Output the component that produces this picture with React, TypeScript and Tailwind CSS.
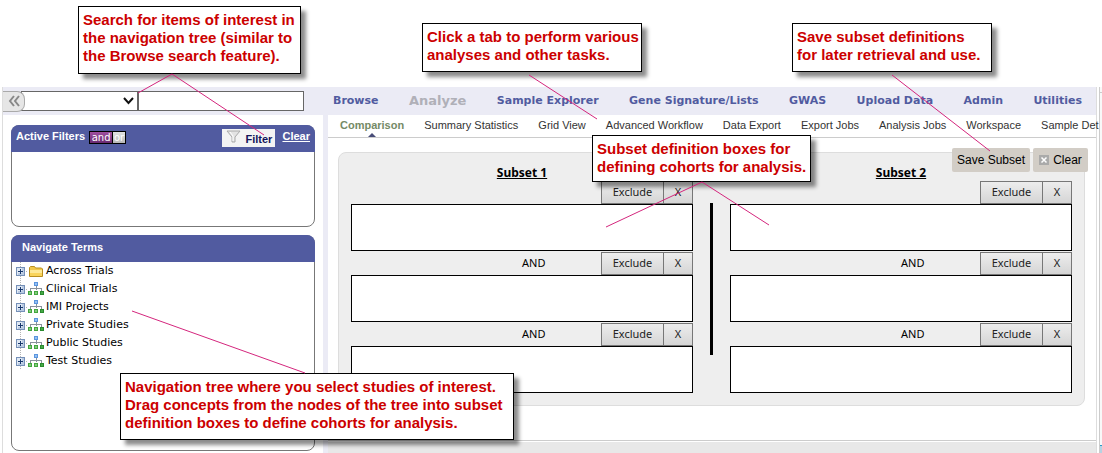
import React from "react";

const callouts = [
  { box: "left-[78px] top-[6px] w-[223px] h-[68px]", lines: ["Search for items of interest in", "the navigation tree (similar to", "the Browse search feature)."] },
  { box: "left-[422px] top-[23px] w-[220px] h-[49px]", lines: ["Click a tab to perform various", "analyses and other tasks."] },
  { box: "left-[792px] top-[23px] w-[200px] h-[49px]", lines: ["Save subset definitions", "for later retrieval and use."] },
  { box: "left-[592px] top-[135px] w-[219px] h-[47px]", lines: ["Subset definition boxes for", "defining cohorts for analysis."] },
  { box: "left-[120px] top-[373px] w-[394px] h-[67px]", lines: ["Navigation tree where you select studies of interest.", "Drag concepts from the nodes of the tree into subset", "definition boxes to define cohorts for analysis."] },
];

function Callout({ box, lines }: { box: string; lines: string[] }) {
  return (
    <div className={`absolute ${box} border border-black bg-white pt-1 pl-1 text-[15px] leading-[18px] font-bold whitespace-nowrap text-[#cc0000] shadow-[5px_5px_4px_rgba(0,0,0,0.45)]`}>
      {lines.map((line) => (
        <div key={line}>{line}</div>
      ))}
    </div>
  );
}

function Expander() {
  return (
    <svg className="h-[18px] w-4 shrink-0" viewBox="0 0 16 18" shapeRendering="crispEdges" aria-hidden="true">
      <path d="M8.500 0v5M8.500 14v4M14 9.500h2" stroke="#b5b5b5" strokeDasharray="1 1" />
      <rect x="4.500" y="5.500" width="8" height="8" fill="#dfe8f3" stroke="#7590b8" />
      <path d="M10 6h2v7H6v-2h4z" fill="#b9cae2" />
      <path d="M6 9.500h5M8.500 7v5" stroke="#17376d" />
    </svg>
  );
}

function FolderIcon() {
  return (
    <svg className="h-[18px] w-4 shrink-0" viewBox="0 0 16 18" aria-hidden="true">
      <path d="M1.500 14.500v-9l1-1h4l1 1.500h6l1 1v7.500z" fill="#f2c84b" stroke="#b98e1e" />
      <path d="M2 8h12v6H2z" fill="#fde998" />
      <path d="M2 11h12v3H2z" fill="#f9d45c" />
    </svg>
  );
}

function StudyIcon() {
  return (
    <svg className="h-[18px] w-4 shrink-0" viewBox="0 0 16 18" shapeRendering="crispEdges" aria-hidden="true">
      <path d="M8 6v4M2.500 11V8.500h11V11" stroke="#8a929b" fill="none" />
      <rect x="6" y="2" width="4" height="4" fill="#5b95dd" />
      <rect x="7" y="3" width="2" height="2" fill="#94c0f4" />
      <path d="M0 11h4v4H0zM6 11h4v4H6z" fill="#43a63f" />
      <path d="M12 11h4v4h-4z" fill="#2a8a2e" />
      <path d="M1 12h2v2H1zM7 12h2v2H7z" fill="#84cc7c" />
      <path d="M13 12h2v2h-2z" fill="#46a946" />
    </svg>
  );
}

const terms = ["Across Trials", "Clinical Trials", "IMI Projects", "Private Studies", "Public Studies", "Test Studies"];

function Sidebar() {
  return (
    <aside className="flex w-[325px] shrink-0 flex-col gap-2 border-r-[5px] border-[#ebebf5] pt-[10px] pr-2 pl-2 text-[11px]">
      <section className="h-[102px] rounded-[8px] border border-[#777] bg-white">
        <header className="-mx-px -mt-px flex h-[27px] items-start rounded-t-[8px] bg-[#515ba0] px-[5px] pt-1 font-bold text-white">
          <h2 className="leading-[14px]">Active Filters</h2>
          <div className="mt-[2px] ml-1 flex h-[13px] border border-black text-[10px] leading-[11px] font-normal" style={{ fontFamily: '"DejaVu Sans", sans-serif' }}>
            <button className="w-[23px] border-r border-black bg-linear-to-b from-[#a04fa0] to-[#6a2a72]">and</button>
            <button className="w-3 bg-linear-to-b from-[#e2e2e2] to-[#b8b8b8]">or</button>
          </div>
          <button className="ml-auto flex h-[18px] w-[53px] items-center gap-1 bg-[#f3f3f3] pl-1 text-[#14145a]">
            <svg className="mb-1 h-[13px] w-[15px]" viewBox="0 0 15 13" aria-hidden="true">
              <path d="M1 1h13L9 7v5H6V7z" fill="#e3e3e3" stroke="#aaa" />
              <path d="M4 2l3 4v5" fill="none" stroke="#fff" />
            </svg>
            <span className="pt-[2px]">Filter</span>
          </button>
          <a href="#clear" className="ml-[7px] leading-[14px] underline">Clear</a>
        </header>
      </section>
      <section className="h-[216px] rounded-[8px] border border-[#777] bg-white">
        <header className="-mx-px -mt-px h-[27px] rounded-t-[8px] bg-[#515ba0] pt-[5px] pl-[11px] font-bold text-white">
          <h2 className="leading-[14px]">Navigate Terms</h2>
        </header>
        <ul className="text-black" style={{ fontFamily: '"DejaVu Sans", sans-serif' }}>
          {terms.map((term, i) => (
            <li key={term} className="flex h-[18px] items-center leading-[18px]">
              <Expander />
              {i === 0 ? <FolderIcon /> : <StudyIcon />}
              <span className="ml-[2px]">{term}</span>
            </li>
          ))}
        </ul>
      </section>
    </aside>
  );
}

function SubsetColumn({ title }: { title: string }) {
  return (
    <section className="flex min-w-0 flex-col gap-px">
      <h3 className="h-[27px] pt-3 text-center text-[12px] leading-4 font-bold underline" style={{ fontFamily: '"Noto Sans", sans-serif' }}>{title}</h3>
      {[0, 1, 2].map((row) => (
        <div key={row}>
          <div className="flex h-[23px] items-center text-[11px]" style={{ fontFamily: '"Noto Sans", sans-serif' }}>
            <span className="w-1/2" />
            {row > 0 && <span className="text-black">AND</span>}
            <div className="ml-auto flex h-full text-[#222]">
              <button className="w-[63px] border border-[#777] bg-linear-to-b from-[#ededed] to-[#d5d5d5]">Exclude</button>
              <button className="w-[29px] border border-l-0 border-[#777] bg-linear-to-b from-[#ededed] to-[#d5d5d5]">X</button>
            </div>
          </div>
          <div className="h-[47px] border border-black bg-white" />
        </div>
      ))}
    </section>
  );
}

const nav = ["Browse", "Analyze", "Sample Explorer", "Gene Signature/Lists", "GWAS", "Upload Data", "Admin", "Utilities"];
const tabs = ["Comparison", "Summary Statistics", "Grid View", "Advanced Workflow", "Data Export", "Export Jobs", "Analysis Jobs", "Workspace", "Sample Det"];

export default function App() {
  return (
    <div className="relative flex overflow-hidden bg-white pt-[87px] text-black" style={{ fontFamily: '"Liberation Sans", Arial, sans-serif' }}>
      <div className="ml-[2px] min-w-0 flex-1 border-x border-[#ddd]">
        <header className="flex h-7 items-center bg-[#ebebf5]">
          <button aria-label="Collapse navigation" className="z-10 flex h-[21px] w-[22px] shrink-0 items-center justify-center rounded-r-[8px] border border-l-0 border-[#aaa] bg-[#e6e6e6]">
            <svg className="h-3 w-3" viewBox="0 0 12 12" fill="none" stroke="#888" strokeWidth="2" aria-hidden="true">
              <path d="M6 1L2 6l4 5M11 1L7 6l4 5" />
            </svg>
          </button>
          <div className="relative -ml-1 h-5 w-[117px] shrink-0">
            <select aria-label="Search category" className="h-full w-full appearance-none border border-[#666] bg-white">
              <option></option>
            </select>
            <svg className="pointer-events-none absolute top-[6px] right-[4px] h-2 w-[11px]" viewBox="0 0 11 8" fill="none" stroke="#111" strokeWidth="2" aria-hidden="true">
              <path d="M1 1l4.500 5L10 1" />
            </svg>
          </div>
          <input aria-label="Search term" className="h-5 w-[166px] shrink-0 border border-[#666] bg-white" />
          <nav className="ml-[29px] flex min-w-0 flex-1 items-center justify-between pr-[14px] text-[11px] font-bold whitespace-nowrap text-[#515ba0]" style={{ fontFamily: '"DejaVu Sans", sans-serif' }}>
            {nav.map((item) => (
              <a key={item} href="#nav" className={item === "Analyze" ? "text-[13px] text-[#b0b0b8]" : ""}>{item}</a>
            ))}
          </nav>
        </header>
        <div className="flex">
          <Sidebar />
          <main className="flex min-w-0 flex-1 flex-col">
            <nav className="flex h-[23px] gap-5 border-b border-[#ccc] pl-3 text-[11px] leading-5 whitespace-nowrap text-[#333]">
              {tabs.map((tab, i) => (
                <a key={tab} href="#tab" className={i === 0 ? "flex flex-col items-center font-bold text-[#758a66]" : ""}>
                  {tab}
                  {i === 0 && <svg className="-mt-[2px] h-1 w-2 shrink-0" viewBox="0 0 8 4" aria-hidden="true"><path d="M4 0l4 4H0z" fill="#484c78" /></svg>}
                </a>
              ))}
            </nav>
            <div className="relative mt-[14px] mr-[11px] ml-[10px] h-[254px] rounded-[8px] border border-[#ddd] bg-[#eee] px-3">
              <div className="grid grid-cols-[1fr_3px_1fr] gap-[17px]">
                <SubsetColumn title="Subset 1" />
                <div className="mt-[50px] h-[152px] bg-black" />
                <SubsetColumn title="Subset 2" />
              </div>
              <div className="absolute -top-[5px] -right-[4px] flex gap-[3px] text-[12px] text-black">
                <button className="h-6 w-[78px] rounded-[2px] bg-[#d2cdc6]">Save Subset</button>
                <button className="flex h-6 w-[55px] items-center justify-center gap-1 rounded-[2px] bg-[#d2cdc6]">
                  <svg className="h-[10px] w-[10px]" viewBox="0 0 10 10" aria-hidden="true"><path d="M0 0h10v10H0z" fill="#aaa" /><path d="M2.500 2.500l5 5M7.500 2.500l-5 5" stroke="#fff" strokeWidth="1.500" /></svg>
                  Clear
                </button>
              </div>
            </div>
            <div className="mt-[34px] border-b border-[#ccc]" />
            <div className="mt-px min-h-[11px] flex-1 bg-[#e8e8e8]" />
          </main>
        </div>
      </div>
      <div className="ml-[2px] flex w-[3px] flex-col border-l border-[#ccc] bg-[#f8f8f8]">
        <div className="mt-[5px] border-t border-[#ccc]" />
        <div className="mt-auto h-2 border-t border-[#2c9ac8] bg-[#b5d3e3]" />
      </div>
      {callouts.map((c) => (
        <Callout key={c.box} {...c} />
      ))}
      <svg className="pointer-events-none absolute top-0 left-0 h-[453px] w-[1102px]" viewBox="0 0 1102 453" fill="none" stroke="#d4267d" aria-hidden="true">
        <path d="M138 93L172 74L264 135M529 75L597 119M892 75L990 151M606 227L702 182L769 225M132 311L305 373" />
      </svg>
    </div>
  );
}
